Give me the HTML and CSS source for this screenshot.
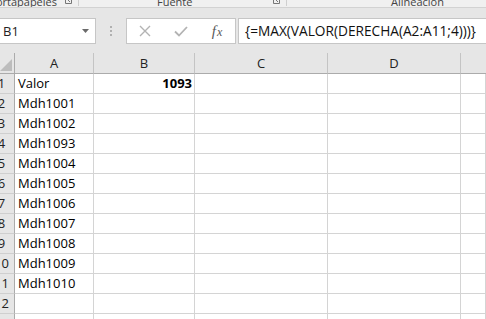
FILE: index.html
```html
<!DOCTYPE html>
<html lang="es">
<head>
<meta charset="utf-8">
<link rel="stylesheet" href="styles.css">
</head>
<body>
<div class="ribbon">
  <div class="grp g1"><span class="lbl">Portapapeles</span><svg class="launch" width="7" height="5" viewBox="0 0 7 5"><path d="M0.5 0V4.5H6.5V0" fill="none" stroke="#777" stroke-width="1"/><path d="M2 0L5 3" stroke="#777" stroke-width="1"/></svg></div>
  <div class="grp g2"><span class="lbl">Fuente</span><svg class="launch" width="7" height="5" viewBox="0 0 7 5"><path d="M0.5 0V4.5H6.5V0" fill="none" stroke="#777" stroke-width="1"/><path d="M2 0L5 3" stroke="#777" stroke-width="1"/></svg></div>
  <div class="grp g3"><span class="lbl">Alineación</span></div>
</div>
<div class="fbar">
  <div class="namebox"><span class="nbtext">B1</span><svg width="7" height="4" viewBox="0 0 7 4"><path d="M0 0H7L3.5 4Z" fill="#6a6a6a"/></svg></div>
  <div class="grip"><i></i><i></i><i></i></div>
  <div class="btns">
    <span class="btn"><svg width="12" height="12" viewBox="0 0 12 12"><path d="M1 1L11 11M11 1L1 11" stroke="#b3b3b3" stroke-width="1.4"/></svg></span>
    <span class="btn"><svg width="14" height="11" viewBox="0 0 14 11"><path d="M1 5.5L5 9.5L13 1" fill="none" stroke="#b3b3b3" stroke-width="1.8"/></svg></span>
    <span class="btn fx"><i>f</i><i class="x">x</i></span>
  </div>
  <div class="finput">{=MAX(VALOR(DERECHA(A2:A11;4)))}</div>
</div>
<div class="sheet">
  <div class="row hdr">
    <div class="c corner"><svg width="13" height="13" viewBox="0 0 13 13"><path d="M0 13H12V1Z" fill="#bdbdbd"/></svg></div>
    <div class="c ch">A</div><div class="c ch">B</div><div class="c ch">C</div><div class="c ch">D</div><div class="c ch last"></div>
  </div>
  <div class="row"><div class="c rh"><span>1</span></div><div class="c">Valor</div><div class="c num">1093</div><div class="c"></div><div class="c"></div><div class="c"></div></div>
  <div class="row"><div class="c rh"><span>2</span></div><div class="c">Mdh1001</div><div class="c"></div><div class="c"></div><div class="c"></div><div class="c"></div></div>
  <div class="row"><div class="c rh"><span>3</span></div><div class="c">Mdh1002</div><div class="c"></div><div class="c"></div><div class="c"></div><div class="c"></div></div>
  <div class="row"><div class="c rh"><span>4</span></div><div class="c">Mdh1093</div><div class="c"></div><div class="c"></div><div class="c"></div><div class="c"></div></div>
  <div class="row"><div class="c rh"><span>5</span></div><div class="c">Mdh1004</div><div class="c"></div><div class="c"></div><div class="c"></div><div class="c"></div></div>
  <div class="row"><div class="c rh"><span>6</span></div><div class="c">Mdh1005</div><div class="c"></div><div class="c"></div><div class="c"></div><div class="c"></div></div>
  <div class="row"><div class="c rh"><span>7</span></div><div class="c">Mdh1006</div><div class="c"></div><div class="c"></div><div class="c"></div><div class="c"></div></div>
  <div class="row"><div class="c rh"><span>8</span></div><div class="c">Mdh1007</div><div class="c"></div><div class="c"></div><div class="c"></div><div class="c"></div></div>
  <div class="row"><div class="c rh"><span>9</span></div><div class="c">Mdh1008</div><div class="c"></div><div class="c"></div><div class="c"></div><div class="c"></div></div>
  <div class="row"><div class="c rh"><span>10</span></div><div class="c">Mdh1009</div><div class="c"></div><div class="c"></div><div class="c"></div><div class="c"></div></div>
  <div class="row"><div class="c rh"><span>11</span></div><div class="c">Mdh1010</div><div class="c"></div><div class="c"></div><div class="c"></div><div class="c"></div></div>
  <div class="row"><div class="c rh"><span>12</span></div><div class="c"></div><div class="c"></div><div class="c"></div><div class="c"></div><div class="c"></div></div>
  <div class="row"><div class="c rh"><span>13</span></div><div class="c"></div><div class="c"></div><div class="c"></div><div class="c"></div><div class="c"></div></div>
</div>
</body>
</html>
```
FILE: styles.css
```css
html, body {
  margin: 0;
  padding: 0;
  width: 486px;
  height: 319px;
  overflow: hidden;
  background: #e6e6e6;
  font-family: "Open Sans", "Noto Sans", sans-serif;
  color: #000;
}
.ribbon {
  display: flex;
  height: 7px;
  border-bottom: 1px solid #d2d2d2;
  background: #f0f0f0;
  overflow: hidden;
}
.grp {
  display: flex;
  align-items: flex-start;
  height: 6px;
  box-sizing: border-box;
  flex-shrink: 0;
}
.lbl {
  display: block;
  font-size: 11px;
  line-height: 3px;
  color: #444;
  white-space: nowrap;
}
.launch { display: block; margin-top: -1px; flex-shrink: 0; }
.g1 {
  width: 79px;
  border-right: 1px solid #cfcfcf;
  justify-content: flex-end;
  padding-right: 6px;
}
.g1 .lbl { margin-right: 8px; }
.g2 {
  width: 208px;
  border-right: 1px solid #cfcfcf;
  padding-left: 78px;
  padding-right: 6px;
}
.g2 .lbl { margin-right: auto; }
.g3 { padding-left: 104px; }

.fbar {
  display: flex;
  align-items: flex-start;
  height: 45px;
  padding-top: 10px;
  box-sizing: border-box;
  background: #e6e6e6;
}
.namebox {
  width: 97px;
  margin-left: -1px;
  height: 26px;
  box-sizing: border-box;
  border: 1px solid #c6c6c6;
  background: #fff;
  display: flex;
  align-items: center;
  justify-content: space-between;
  padding: 0 6px 0 3px;
  flex-shrink: 0;
}
.nbtext { font-size: 13px; color: #222; }
.grip {
  width: 30px;
  height: 26px;
  display: flex;
  flex-direction: column;
  align-items: center;
  justify-content: center;
  gap: 2px;
  flex-shrink: 0;
}
.grip i {
  display: block;
  width: 2px;
  height: 2px;
  background: #b0b0b0;
}
.btns {
  width: 110px;
  height: 26px;
  box-sizing: border-box;
  border: 1px solid #c6c6c6;
  background: #fff;
  display: flex;
  flex-shrink: 0;
}
.btn {
  width: 36px;
  display: flex;
  align-items: center;
  justify-content: center;
}
.fx {
  font-family: "Liberation Serif", serif;
  color: #595959;
  font-size: 15px;
}
.fx .x { font-size: 12px; margin-left: 1px; margin-top: 3px; }
.finput {
  flex: 1;
  margin-left: 2px;
  height: 26px;
  box-sizing: border-box;
  border: 1px solid #c6c6c6;
  border-right: none;
  background: #fff;
  font-size: 13.7px;
  line-height: 24px;
  padding-left: 6px;
  white-space: nowrap;
  overflow: hidden;
  color: #111;
}

.sheet { background: #fff; }
.row {
  display: grid;
  grid-template-columns: 15px 79px 101px 133px 133px 1fr;
  height: 20px;
}
.c {
  box-sizing: border-box;
  border-right: 1px solid #d4d4d4;
  border-bottom: 1px solid #d4d4d4;
  font-size: 13px;
  line-height: 19px;
  padding: 0 3px;
  white-space: nowrap;
  overflow: hidden;
}
.num { text-align: right; font-weight: 700; padding-right: 2px; }
.hdr { height: 21px; background: #e6e6e6; }
.hdr .c {
  border-bottom-color: #ababab;
  border-right-color: #c4c4c4;
  line-height: 20px;
  text-align: center;
  color: #222;
}
.hdr .c.last { border-right: none; }
.corner { padding: 0; display: flex; align-items: flex-end; }
.corner svg { display: block; margin-bottom: 2px; }
.hdr .corner { border-right-color: #ababab; }
.rh {
  background: #e6e6e6;
  border-right-color: #ababab;
  border-bottom-color: #cfcfcf;
  padding: 0;
  color: #222;
}
.rh span {
  display: block;
  width: 37px;
  margin-left: -17px;
  text-align: center;
}
```
